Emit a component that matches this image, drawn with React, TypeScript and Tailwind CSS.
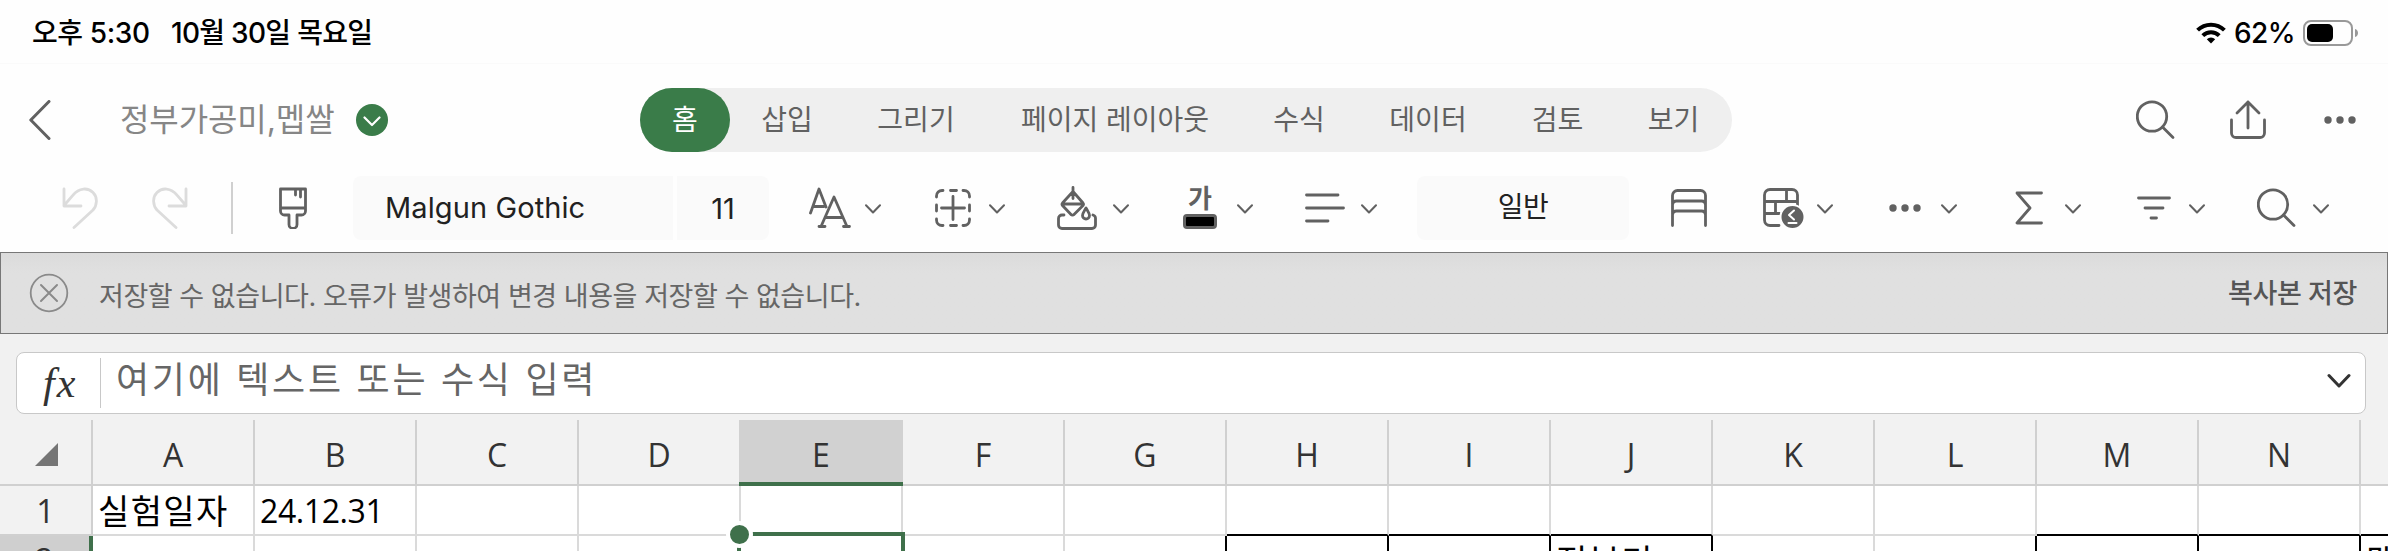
import type { ReactNode } from "react";

const SANS = "font-['Inter','Noto_Sans_CJK_KR',sans-serif]";
const GRID = "font-['Open_Sans','Noto_Sans_CJK_KR',sans-serif]";

const Icon = ({ w, h, children, className = "" }: { w: number; h: number; children: ReactNode; className?: string }) => (
	<svg
		width={w}
		height={h}
		viewBox={`0 0 ${w} ${h}`}
		fill="none"
		stroke="currentColor"
		strokeWidth={2.8}
		strokeLinecap="round"
		strokeLinejoin="round"
		className={`block shrink-0 ${className}`}
	>
		{children}
	</svg>
);

const Chevron = () => (
	<Icon w={16} h={10} className="mt-0.5">
		<path d="M1 1.2 8 8.5 15 1.2" strokeWidth={2} />
	</Icon>
);

const Dots = () => (
	<Icon w={32} h={8}>
		<g fill="currentColor" stroke="none">
			<circle cx="4" cy="4" r="3.7" />
			<circle cx="16" cy="4" r="3.7" />
			<circle cx="28" cy="4" r="3.7" />
		</g>
	</Icon>
);

const Search = () => (
	<Icon w={40} h={40}>
		<circle cx="16" cy="16.5" r="14.7" />
		<path d="M26.5 27 37 37.5" />
	</Icon>
);

const StatusBar = () => (
	<div className="h-[63px] flex items-center justify-between pl-8 pr-[30px] pt-0.5 text-[28px] leading-none font-medium text-black">
		<div className="flex gap-6 whitespace-pre">
			<span className="w-[115px] tracking-[-0.4px]">오후 5:30</span>
			<span className="tracking-[-0.7px]">10월 30일 목요일</span>
		</div>
		<div className="flex items-center">
			<svg width="30" height="22" viewBox="0 0 30 22" fill="none" stroke="currentColor" strokeWidth="4" className="mr-2">
				<path d="M1.6 8.2a19 19 0 0 1 26.8 0" />
				<path d="M6.8 13.6a11.7 11.7 0 0 1 16.4 0" />
				<path d="M15 21.6 10.8 17.3a6 6 0 0 1 8.4 0Z" fill="currentColor" stroke="none" />
			</svg>
			<span className="w-[61px] mr-2 tracking-[-0.6px]">62%</span>
			<svg width="55" height="26" viewBox="0 0 55 26">
				<rect x="1" y="1" width="48" height="24" rx="7" fill="none" stroke="#999" strokeWidth="2" />
				<rect x="4" y="4" width="26" height="18" rx="5" />
				<path d="M52 9c4 1 4 7 0 8Z" fill="#999" />
			</svg>
		</div>
	</div>
);

const tabs = [
	{ label: "삽입", width: "w-[114px]" },
	{ label: "그리기", width: "w-[144px]" },
	{ label: "페이지 레이아웃", width: "w-[254px]" },
	{ label: "수식", width: "w-[114px]" },
	{ label: "데이터", width: "w-[144px]" },
	{ label: "검토", width: "w-[115px]" },
	{ label: "보기", width: "w-[117px]" },
];

const TitleBar = () => (
	<div className="h-[113px] bg-[#fefefe] border-t border-[#fafafa] flex items-center text-[#616161]">
		<Icon w={22} h={40} className="ml-[29px]">
			<path d="M20 1.5 1.8 20 20 38.5" strokeWidth={3} />
		</Icon>
		<span className="ml-[69px] w-[215px] whitespace-nowrap text-[32px] leading-none tracking-[-0.1px] text-[#868686]">
			정부가공미,멥쌀
		</span>
		<div className="ml-[21px] size-8 rounded-full bg-[#3a7c49] flex items-center justify-center text-white">
			<Icon w={18} h={11} className="mt-0.5">
				<path d="M1.5 1.5 9 9 16.5 1.5" strokeWidth={2.2} />
			</Icon>
		</div>
		<nav className="ml-[252px] h-16 flex items-center rounded-full bg-[#efefef] text-[28px] leading-none">
			<div className="w-[90px] h-16 rounded-full bg-[#3a7c49] flex items-center justify-center text-white">홈</div>
			{tabs.map((tab) => (
				<div key={tab.label} className={`${tab.width} text-center whitespace-nowrap shrink-0`}>
					{tab.label}
				</div>
			))}
		</nav>
		<div className="ml-auto mr-8 flex items-center">
			<Search />
			<Icon w={36} h={40} className="ml-[54px]">
				<path d="M18 2v26M7 13 18 2l11 11M1.5 20v13a4.5 4.5 0 0 0 4.5 4.5h24a4.5 4.5 0 0 0 4.5-4.5V20" />
			</Icon>
			<div className="ml-[58px]">
				<Dots />
			</div>
		</div>
	</div>
);

const Tool = ({ className, children }: { className: string; children: ReactNode }) => (
	<div className={`flex items-center justify-between shrink-0 ${className}`}>
		{children}
		<Chevron />
	</div>
);

const Toolbar = () => (
	<div className="h-[76px] pb-3 flex items-center bg-[#fefefe] text-[#616161] text-[28px] leading-none">
		<Icon w={36} h={42} className="ml-[62px] text-[#dcdcdc]">
			<path d="M2 2v17h17M2 18.5 11 8.2C17 .5 26 .5 31 5.5s4 13 0 17.5L12 40.5" />
		</Icon>
		<Icon w={36} h={42} className="ml-[54px] text-[#dcdcdc]">
			<path d="M34 2v17H17M34 18.5 25 8.2C19 .5 10 .5 5 5.5s-4 13 0 17.5L24 40.5" />
		</Icon>
		<div className="ml-[43px] w-0.5 h-[52px] bg-[#d0d0d0]" />
		<Icon w={28} h={42} className="ml-[46px]">
			<path d="M1.5 2h25v22a4 4 0 0 1-4 4H18v9.5a4 4 0 0 1-8 0V28H5.5a4 4 0 0 1-4-4ZM1.5 21h25M16.5 2v6M21.5 2v8" />
		</Icon>
		<div className="ml-[46px] w-80 h-16 pl-8 pb-0.5 rounded-l-lg bg-[#fafafa] flex items-center whitespace-nowrap text-[29px] tracking-[0.1px] text-[#212121]">
			Malgun Gothic
		</div>
		<div className="ml-1 w-[92px] h-16 rounded-r-lg bg-[#fafafa] flex items-center justify-center text-[29px] text-[#212121]">
			11
		</div>
		<Tool className="ml-10 w-[72px]">
			<Icon w={42} h={42}>
				<path d="M1.5 26 10 2l7 18M5 19.500h10M12 39.500 25 10l13 29.500M16 30.500h18M10 39.500h6M34.500 39.500h6" />
			</Icon>
		</Tool>
		<Tool className="ml-[54px] w-[70px]">
			<Icon w={36} h={38}>
				<path d="M1.5 8V7A5.5 5.5 0 0 1 7 1.5h1M15.500 1.500h6M28 1.500h1A5.500 5.500 0 0 1 34.500 7v1M34.500 16v6M34.500 30v1a5.500 5.500 0 0 1-5.500 5.500h-1M21.500 36.500h-6M8 36.500H7A5.500 5.500 0 0 1 1.500 31v-1M1.500 22v-6M18 7.500v23M6.500 19h23" />
			</Icon>
		</Tool>
		<Tool className="ml-[52px] w-[72px]">
			<Icon w={40} h={44}>
				<path d="M16 1.5v11M16 5.5 5.5 17a2 2 0 0 0 0 2.500L14 28.500a2 2 0 0 0 3 0l9-9a2 2 0 0 0 0-2.500ZM5.500 18H26M7 29H5a3.500 3.500 0 0 0-3.500 3.500V39A3.500 3.500 0 0 0 5 42.500h30a3.500 3.500 0 0 0 3.500-3.500v-6.500A3.500 3.500 0 0 0 36 29" />
				<path d="M29 22c-2 3.500-3.500 5-3.500 7.500a3.500 3.500 0 0 0 7 0c0-2.500-1.500-4-3.500-7.500Z" />
			</Icon>
		</Tool>
		<Tool className="ml-[54px] w-[70px]">
			<div className="w-[34px] h-[42px] flex flex-col items-center justify-between">
				<span className="text-[26px] leading-[24px] font-bold">가</span>
				<div className="w-[34px] h-[15px] rounded-[4px] border-3 border-[#616161] bg-black" />
			</div>
		</Tool>
		<Tool className="ml-[52px] w-[72px]">
			<Icon w={40} h={30}>
				<path d="M1.5 2h31.500M1.500 15h37M1.500 28h21.500" />
			</Icon>
		</Tool>
		<div className="ml-10 w-[212px] h-16 pb-0.5 rounded-lg bg-[#fafafa] flex items-center justify-center tracking-[-0.5px] text-[#212121]">
			일반
		</div>
		<Icon w={36} h={38} className="ml-[42px]">
			<path d="M1.5 36.500V6.500a5 5 0 0 1 5-5h23a5 5 0 0 1 5 5v30M1.500 15.500a4 4 0 0 1 4-3.500h25a4 4 0 0 1 4 3.500M1.500 25.500a4 4 0 0 1 4-3.500h25a4 4 0 0 1 4 3.500" />
		</Icon>
		<Tool className="ml-[56px] w-[70px]">
			<Icon w={42} h={42}>
				<path d="M16 38.500H7A5.500 5.500 0 0 1 1.500 33V8A5.500 5.500 0 0 1 7 2.500h22A5.500 5.500 0 0 1 34.500 8v12M1.500 14.500h33M23.500 2.500v12M12.500 14.500v12M1.500 26.500h15" />
				<circle cx="29.500" cy="30" r="12" fill="currentColor" stroke="#fefefe" strokeWidth="2" />
				<path d="M31 23.500 26 28l5 4.500M25.500 36h8" stroke="#fff" strokeWidth="2" />
			</Icon>
		</Tool>
		<Tool className="ml-[56px] w-[68px]">
			<Dots />
		</Tool>
		<Tool className="ml-[58px] w-[66px]">
			<Icon w={28} h={34}>
				<path d="M26.500 2H2l13 15L2 32h24.500" />
			</Icon>
		</Tool>
		<Tool className="ml-14 w-[68px]">
			<Icon w={34} h={24}>
				<path d="M1.500 2h31M8 12h18M14 22h5.500" />
			</Icon>
		</Tool>
		<Tool className="ml-[52px] w-[72px]">
			<Search />
		</Tool>
	</div>
);

const Banner = () => (
	<div className="h-[82px] border border-[#777] bg-linear-to-b from-[#dbdbdb] to-[#e0e0e0] to-25% flex items-center pl-7 pr-[30px] whitespace-nowrap text-[27px] leading-none">
		<Icon w={40} h={40} className="text-[#8a8a8a]">
			<circle cx="20" cy="20" r="18.3" strokeWidth={1.8} />
			<path d="m12 12 16 16M28 12 12 28" strokeWidth={2} />
		</Icon>
		<span className="ml-[30px] mt-1.5 tracking-[-0.45px] text-[#666]">
			저장할 수 없습니다. 오류가 발생하여 변경 내용을 저장할 수 없습니다.
		</span>
		<span className="ml-auto mt-px tracking-[-0.4px] font-medium text-[#555]">복사본 저장</span>
	</div>
);

const FormulaBar = () => (
	<div className="h-[86px] bg-[#f1f1f1] pl-4 pr-[22px] pt-[18px]">
		<div className="h-[62px] rounded-lg border border-[#c8c8c8] bg-white flex items-center">
			<span className="ml-[26px] w-[35px] font-['Liberation_Serif',serif] italic text-[42px] leading-none tracking-[2px] text-[#333]">
				fx
			</span>
			<div className="ml-[22px] w-px h-[50px] bg-[#c8c8c8]" />
			<span className="ml-[15px] mt-[-6px] text-[36px] leading-none tracking-[2.7px] whitespace-nowrap text-[#666]">
				여기에 텍스트 또는 수식 입력
			</span>
			<Icon w={24} h={16} className="ml-auto mr-[14px] mt-[-5px] text-[#333]">
				<path d="M2 2.5 12 13 22 2.500" strokeWidth={3} />
			</Icon>
		</div>
	</div>
);

type Column = { name: string; top?: string; next?: string; boxed?: boolean; closed?: boolean };

// boxed: the second row has a black top edge; closed: its right edge is black as well
const columns: Column[] = [
	{ name: "A", top: "실험일자" },
	{ name: "B", top: "24.12.31" },
	{ name: "C" },
	{ name: "D" },
	{ name: "E" },
	{ name: "F" },
	{ name: "G", closed: true },
	{ name: "H", boxed: true, closed: true },
	{ name: "I", boxed: true, closed: true },
	{ name: "J", boxed: true, closed: true, next: "정부미" },
	{ name: "K" },
	{ name: "L", closed: true },
	{ name: "M", boxed: true, closed: true },
	{ name: "N", boxed: true, closed: true },
	{ name: "", boxed: true, next: "멥쌀" },
];

const Sheet = () => (
	<div className={`relative h-[131px] overflow-hidden bg-white text-[#333] leading-none ${GRID}`}>
		<div className="flex h-[66px] text-[32px]">
			<div className="w-[93px] shrink-0 bg-[#f2f2f2] border-r-2 border-b-2 border-[#d0d0d0] pt-[23px] pl-[35px]">
				<svg width="23" height="23" viewBox="0 0 23 23">
					<path d="M23 0v23H0Z" fill="#757575" />
				</svg>
			</div>
			{columns.map((col) => (
				<div
					key={col.name}
					className="w-[162px] shrink-0 bg-[#f2f2f2] border-r-2 border-b-2 border-[#d0d0d0] flex items-center justify-center pt-1.5"
				>
					{col.name}
				</div>
			))}
		</div>
		<div className="flex h-[50px] text-[32px] text-black">
			<div className="w-[93px] shrink-0 bg-[#f2f2f2] border-r-2 border-b-2 border-[#d0d0d0] flex items-center justify-center pt-0.5 text-[#333]">
				1
			</div>
			{columns.map((col) => (
				<div
					key={col.name}
					className={`w-[162px] shrink-0 border-r-2 border-r-[#dadada] border-b-2 flex items-center pl-[5px] pt-0.5 whitespace-nowrap ${
						col.boxed ? "border-b-black" : "border-b-[#dadada]"
					}`}
				>
					<span className={col.name === "A" ? "text-[34px] tracking-[1.4px]" : "tracking-[-0.4px]"}>{col.top}</span>
				</div>
			))}
		</div>
		<div className="flex h-[50px] text-[32px] text-black">
			<div className="w-[93px] shrink-0 bg-[#cfcfcf] border-r-4 border-[#3f704b] flex justify-center pt-2 text-[#333]">2</div>
			{columns.map((col) => (
				<div
					key={col.name}
					className={`w-[162px] shrink-0 border-r-2 pl-[5px] pt-2 text-[34px] tracking-[1.4px] whitespace-nowrap ${
						col.closed ? "border-black" : "border-[#dadada]"
					}`}
				>
					{col.next}
				</div>
			))}
		</div>

		{/* active column header and cell selection lie over the grid lines */}
		<div className="absolute left-[739px] top-0 w-[164px] h-[66px] bg-[#d1d1d1] border-b-4 border-[#3f704b] flex items-center justify-center pt-2 text-[32px]">
			E
		</div>
		<div className="absolute left-[737px] top-[112px] w-[168px] h-[60px] border-4 border-[#3f704b]" />
		<div className="absolute left-[726px] top-[101px] size-[27px] rounded-full border-4 border-white bg-[#3f704b]" />
	</div>
);

const App = () => (
	<div className={`w-[2388px] h-[551px] overflow-hidden bg-[#fefefe] ${SANS}`}>
		<StatusBar />
		<TitleBar />
		<Toolbar />
		<Banner />
		<FormulaBar />
		<Sheet />
	</div>
);

export default App;
